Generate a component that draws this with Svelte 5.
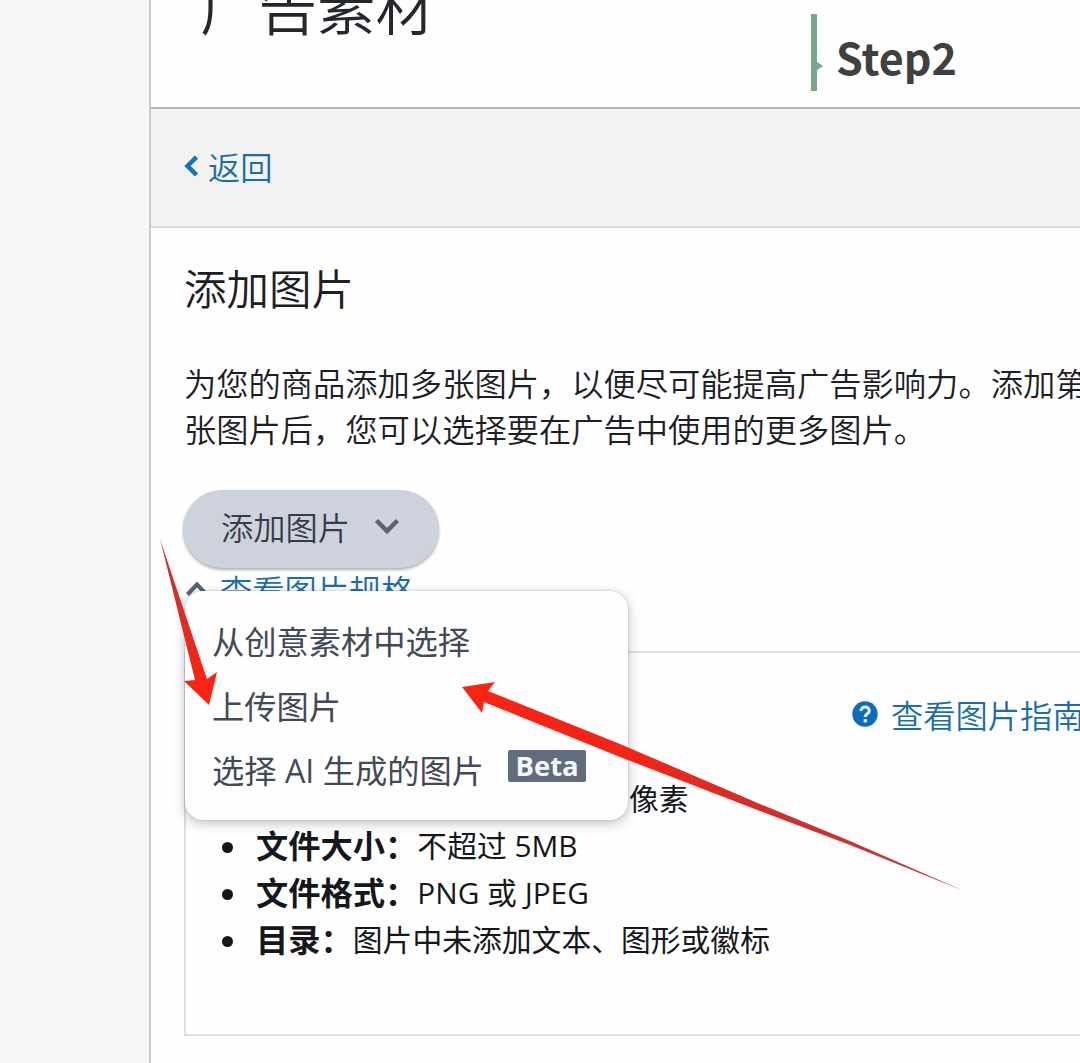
<script>
  const menuItems = [
    { label: '从创意素材中选择' },
    { label: '上传图片' },
    { label: '选择 AI 生成的图片', badge: 'Beta' }
  ];

  const specs = [
    { name: '文件大小：', value: '不超过 5MB' },
    { name: '文件格式：', value: 'PNG 或 JPEG' },
    { name: '目录：', value: '图片中未添加文本、图形或徽标' }
  ];

  let open = $state(true);
</script>

<div class="page">
  <aside class="rail"></aside>

  <main class="content">
    <header class="header">
      <h1>广告素材</h1>
      <div class="step">
        <span class="step-bar"></span>
        <span class="step-label">Step2</span>
      </div>
    </header>

    <nav class="back-bar">
      <a class="back" href="#back">
        <svg width="14" height="22" viewBox="0 0 14 22">
          <path d="M12.500 2 L3.500 11 L12.500 20" fill="none" stroke="#1273b8" stroke-width="4.500" />
        </svg>
        返回
      </a>
    </nav>

    <section class="body">
      <h2>添加图片</h2>
      <p>为您的商品添加多张图片，以便尽可能提高广告影响力。添加第<br />张图片后，您可以选择要在广告中使用的更多图片。</p>

      <div class="dropdown">
        <button class="add" onclick={() => (open = !open)}>
          添加图片
          <svg width="26" height="18" viewBox="0 0 26 18">
            <path d="M2.500 3.500 L13 14 L23.500 3.500" fill="none" stroke="#5a6374" stroke-width="4.500" />
          </svg>
        </button>

        {#if open}
          <ul class="menu">
            {#each menuItems as item}
              <li>
                <span>{item.label}</span>
                {#if item.badge}<span class="badge">{item.badge}</span>{/if}
              </li>
            {/each}
          </ul>
        {/if}
      </div>

      <a class="spec-toggle" href="#specs">
        <svg width="24" height="16" viewBox="0 0 24 16">
          <path d="M2.500 13.500 L12 3.500 L21.500 13.500" fill="none" stroke="#5a6374" stroke-width="4" />
        </svg>
        查看图片规格
      </a>

      <div class="spec-box">
        <a class="guide" href="#guide">
          <svg width="26" height="26" viewBox="0 0 26 26">
            <circle cx="13" cy="13" r="12.700" fill="#0f6cbd" />
            <path
              d="M9 10 C9 4.800 17.300 4.800 17.300 9.700 C17.300 12.700 13.200 12.800 13.200 16"
              fill="none" stroke="#e6f5ff" stroke-width="3" />
            <rect x="11.600" y="18.200" width="3.300" height="3.200" fill="#e6f5ff" />
          </svg>
          查看图片指南
        </a>
        <ul class="specs">
          <li class="covered"><span class="value">像素</span></li>
          {#each specs as spec}
            <li><b>{spec.name}</b><span class="value">{spec.value}</span></li>
          {/each}
        </ul>
      </div>
    </section>
  </main>

  <!-- pointers drawn over the page -->
  <svg class="arrows" width="1080" height="1063" viewBox="0 0 1080 1063">
    <defs>
      <linearGradient id="down" gradientUnits="userSpaceOnUse" x1="160" y1="540" x2="208" y2="704">
        <stop offset="0" stop-color="#b93a35" />
        <stop offset="0.6" stop-color="#e52a1e" />
        <stop offset="0.8" stop-color="#fb2414" />
      </linearGradient>
      <linearGradient id="left" gradientUnits="userSpaceOnUse" x1="964" y1="891" x2="462" y2="686">
        <stop offset="0" stop-color="#b9433f" />
        <stop offset="0.35" stop-color="#c9322b" />
        <stop offset="0.65" stop-color="#f02518" />
        <stop offset="1" stop-color="#fb2414" />
      </linearGradient>
    </defs>
    <path d="M160 539 L207 679 L217 672 L209 705 L184 681 L195 680 Z" fill="url(#down)" />
    <path d="M462 687 L495 682 L488 691 L620 744 L760 804 L850 841 L964 891 L850 845 L760 811 L620 757 L484 702 L482 713 Z" fill="url(#left)" />
  </svg>
</div>

<style>
  :global(body) {
    margin: 0;
    background: #fff;
  }

  .page {
    position: relative;
    display: flex;
    width: 1080px;
    height: 1063px;
    overflow: hidden;
    font-family: 'Open Sans', 'Noto Sans CJK SC', sans-serif;
    font-size: 32.270px;
    font-weight: 350;
    color: #1c2026;
  }

  .rail {
    flex: none;
    width: 149px;
    background: #f7f7f7;
    border-right: 2px solid #cbcbcb;
  }

  .content {
    flex: none;
    width: 929px;
    background: #fefefe;
  }

  a {
    color: #1b6ea8;
    text-decoration: none;
  }

  svg {
    flex: none;
  }

  .header {
    display: flex;
    align-items: flex-start;
    height: 107px;
    border-bottom: 2px solid #b5b5b5;
  }

  h1 {
    width: 611px;
    margin: -33px 0 0 49px;
    font-size: 58.500px;
    font-weight: 350;
    line-height: 80px;
    color: #24272c;
  }

  .step {
    display: flex;
    align-items: center;
    gap: 19px;
    height: 77px;
    margin-top: 14px;
  }

  .step-bar {
    position: relative;
    width: 6px;
    height: 77px;
    background: #7aa68a;
  }

  .step-bar::after {
    content: '';
    position: absolute;
    left: 6px;
    top: 48px;
    border: 4px solid transparent;
    border-left: 6px solid #7aa68a;
    border-right: 0;
  }

  .step-label {
    padding-top: 7px;
    font-family: 'Noto Sans CJK SC', sans-serif;
    font-size: 43px;
    font-weight: 700;
    line-height: 70px;
    color: #404040;
  }

  .back-bar {
    display: flex;
    align-items: center;
    height: 117px;
    padding-left: 33px;
    background: #f2f2f2;
    border-bottom: 2px solid #dcdcdc;
  }

  .back {
    display: flex;
    align-items: center;
    gap: 10px;
    padding-bottom: 3px;
  }

  .body {
    padding: 31px 0 0 34px;
  }

  h2 {
    margin: 0 0 0 -1px;
    font-size: 42.500px;
    font-weight: 350;
    line-height: 60px;
  }

  p {
    margin: 42px 0 0 -1px;
    line-height: 46px;
    white-space: nowrap;
  }

  .dropdown {
    position: relative;
    width: 256px;
    margin: 37px 0 0 -2px;
  }

  .add {
    display: flex;
    align-items: center;
    gap: 24px;
    width: 256px;
    height: 78px;
    padding: 0 0 6px 38px;
    border: 0;
    border-radius: 39px;
    background: #ced2dd;
    box-shadow: 0 2px 3px rgba(60, 65, 80, 0.4);
    font: inherit;
    color: #353c4b;
    white-space: nowrap;
  }

  .menu {
    position: absolute;
    z-index: 2;
    left: 2px;
    top: 101px;
    box-sizing: border-box;
    width: 443px;
    height: 229px;
    margin: 0;
    padding: 17px 27px;
    list-style: none;
    background: #fefefe;
    border-radius: 18px;
    box-shadow: 0 3px 12px rgba(40, 45, 60, 0.3), 0 0 2px rgba(40, 45, 60, 0.25);
    font-weight: 400;
    color: #424957;
  }

  .menu li {
    display: flex;
    align-items: center;
    height: 64.500px;
    white-space: nowrap;
  }

  .badge {
    width: 78px;
    height: 32px;
    margin: 0 0 7px 24px;
    border-radius: 2px;
    background: #626c7f;
    font-size: 27.500px;
    font-weight: 700;
    line-height: 31px;
    text-align: center;
    color: #f4f9fd;
  }

  .spec-toggle {
    display: flex;
    align-items: center;
    gap: 11px;
    height: 42px;
    padding-bottom: 4px;
  }

  .spec-box {
    box-sizing: border-box;
    height: 385px;
    margin: 37px 0 0 -1px;
    padding-top: 38px;
    border: 2px solid #dedede;
    border-right: 0;
  }

  .guide {
    display: flex;
    align-items: center;
    gap: 13px;
    height: 46px;
    margin-left: 666px;
    white-space: nowrap;
  }

  .specs {
    margin: 38px 0 0;
    padding: 0;
    list-style: none;
  }

  .specs li {
    display: flex;
    align-items: center;
    height: 47px;
    padding-left: 36px;
    line-height: 47px;
    color: #15171a;
  }

  .specs li::before {
    content: '';
    width: 11px;
    height: 11px;
    margin: 3px 23px 0 0;
    border-radius: 50%;
    background: #15171a;
  }

  .specs .covered .value {
    margin-left: 373px;
  }

  .value {
    font-size: 29.800px;
    font-weight: 400;
    white-space: nowrap;
  }

  .arrows {
    position: absolute;
    z-index: 3;
    left: 0;
    top: 0;
    pointer-events: none;
  }
</style>
